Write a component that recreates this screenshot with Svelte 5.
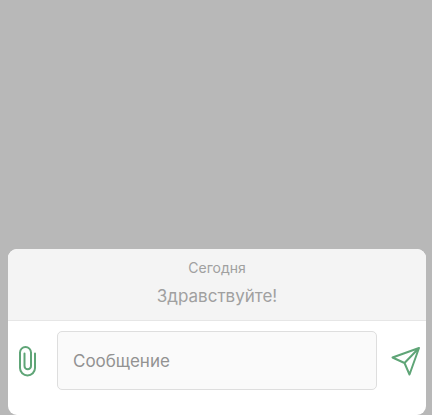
<script lang="ts">
  let message = $state("");
  let messages = $state([{ id: 1, text: "Здравствуйте!" }]);

  function send(event: SubmitEvent) {
    event.preventDefault();
    const text = message.trim();
    if (!text) return;
    messages.push({ id: messages.length + 1, text });
    message = "";
  }
</script>

<main class="page">
  <section class="chat" aria-label="Чат">
    <div class="history">
      <time class="day">Сегодня</time>
      {#each messages as item (item.id)}
        <p class="message">{item.text}</p>
      {/each}
    </div>

    <form class="composer" onsubmit={send}>
      <button type="button" class="icon-btn clip" aria-label="Прикрепить файл">
        <svg viewBox="0 0 20 32" width="20" height="32" aria-hidden="true">
          <path d="M18 8.5V23a7.5 7.5 0 0 1-15 0V7.5a5.5 5.5 0 0 1 11 0V21a3 3 0 0 1-6.500 0V8.5" />
        </svg>
      </button>
      <input bind:value={message} type="text" aria-label="Сообщение" placeholder="Сообщение" />
      <button type="submit" class="icon-btn" aria-label="Отправить">
        <svg viewBox="0 0 30 32" width="30" height="32" aria-hidden="true">
          <path d="M28 3 1.500 12.500l12 5.500L18.500 29.500 28 3 13.500 18" />
        </svg>
      </button>
    </form>
  </section>
</main>

<style>
  :global(body) {
    margin: 0;
    background: #b8b8b8;
  }

  .page {
    display: flex;
    flex-direction: column;
    justify-content: flex-end;
    box-sizing: border-box;
    min-height: 100vh;
    padding: 0 6px 0 8px;
    font-family: Inter, "Liberation Sans", sans-serif;
  }

  .chat {
    overflow: hidden;
    border-radius: 9px;
    background: #fff;
  }

  .history {
    display: flex;
    flex-direction: column;
    align-items: center;
    gap: 8px;
    padding: 10px 16px 13px;
    border-bottom: 1px solid #e6e6e6;
    background: #f4f4f4;
    color: #a0a0a0;
  }

  .day {
    font-size: 14px;
    line-height: 18px;
  }

  .message {
    margin: 0;
    font-size: 17px;
    line-height: 22px;
  }

  .composer {
    display: flex;
    align-items: center;
    gap: 14px;
    padding: 10px 5px 25px 9px;
  }

  .icon-btn {
    display: flex;
    flex: none;
    padding: 0;
    border: none;
    background: transparent;
    cursor: pointer;
  }

  .clip {
    padding-right: 6px;
  }

  svg {
    fill: none;
    stroke: #5fa577;
    stroke-width: 2;
    stroke-linecap: round;
    stroke-linejoin: round;
  }

  input {
    flex: 1;
    min-width: 0;
    height: 59px;
    box-sizing: border-box;
    padding: 0 15px;
    border: 1px solid #dedede;
    border-radius: 5px;
    background: #fafafa;
    color: #444;
    font: inherit;
    font-size: 17px;
    outline: none;
  }

  input::placeholder {
    color: #929292;
    opacity: 1;
  }

  input:focus {
    border-color: #5fa577;
  }
</style>
